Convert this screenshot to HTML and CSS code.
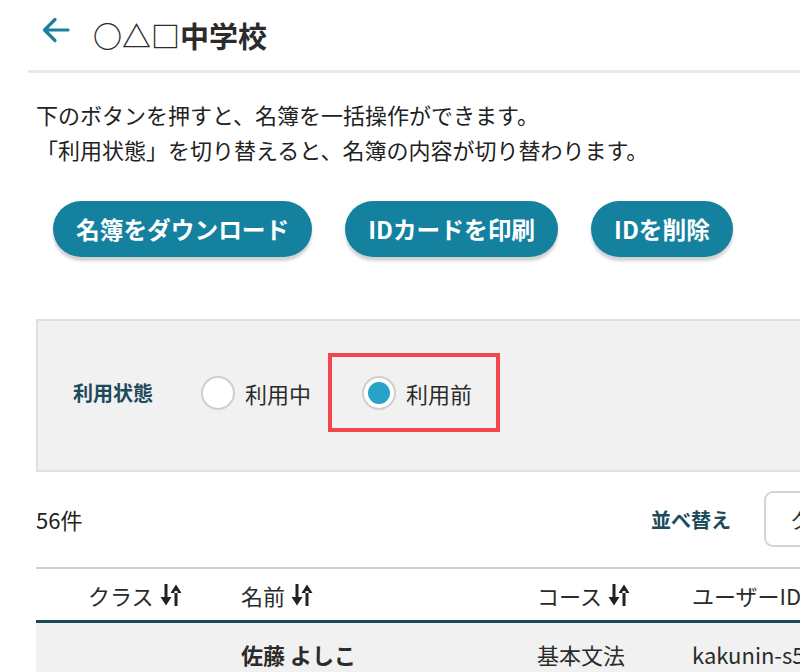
FILE: index.html
```html
<!DOCTYPE html>
<html lang="ja">
<head>
<meta charset="utf-8">
<link rel="stylesheet" href="styles.css">
</head>
<body>
<div class="page">
  <header class="header">
    <svg class="back" width="28" height="26" viewBox="0 0 28 26"><path d="M26 13H3M13 2.5L2.5 13 13 23.5" fill="none" stroke="#1a7f9c" stroke-width="3.2" stroke-linecap="round" stroke-linejoin="round"/></svg>
    <h1 class="title">○△□中学校</h1>
  </header>
  <p class="intro">下のボタンを押すと、名簿を一括操作ができます。<br>「利用状態」を切り替えると、名簿の内容が切り替わります。</p>
  <div class="actions">
    <button class="btn">名簿をダウンロード</button>
    <button class="btn">IDカードを印刷</button>
    <button class="btn">IDを削除</button>
  </div>
  <div class="main">
    <div class="filter">
      <span class="filter-label">利用状態</span>
      <label class="radio"><span class="dot"></span>利用中</label>
      <div class="highlight">
        <label class="radio"><span class="dot checked"></span>利用前</label>
      </div>
    </div>
    <div class="toolbar">
      <span class="count">56件</span>
      <span class="sort-label">並べ替え</span>
      <div class="select">クラス順</div>
    </div>
    <div class="table">
      <div class="row head">
        <div class="cell c1">クラス<svg class="sort" width="22" height="24" viewBox="0 0 22 24"><path d="M4.5 1h3v15h-3zM0.5 14h11L6 22.5zM14.5 8h3v15h-3zM10.5 10h11L16 1.5z" fill="#222"/></svg></div>
        <div class="cell c2">名前<svg class="sort" width="22" height="24" viewBox="0 0 22 24"><path d="M4.5 1h3v15h-3zM0.5 14h11L6 22.5zM14.5 8h3v15h-3zM10.5 10h11L16 1.5z" fill="#222"/></svg></div>
        <div class="cell c3">コース<svg class="sort" width="22" height="24" viewBox="0 0 22 24"><path d="M4.5 1h3v15h-3zM0.5 14h11L6 22.5zM14.5 8h3v15h-3zM10.5 10h11L16 1.5z" fill="#222"/></svg></div>
        <div class="cell c4">ユーザーID</div>
      </div>
      <div class="row body">
        <div class="cell c1"></div>
        <div class="cell c2 name">佐藤 よしこ</div>
        <div class="cell c3">基本文法</div>
        <div class="cell c4">kakunin-s5001</div>
      </div>
    </div>
  </div>
</div>
</body>
</html>
```
FILE: styles.css
```css
* { box-sizing: border-box; }
html, body { margin: 0; padding: 0; }
body {
  width: 800px;
  height: 672px;
  overflow: hidden;
  background: #fff;
  font-family: "Noto Sans CJK JP", "Noto Sans", sans-serif;
  color: #2b2b2b;
}
.page { width: 1000px; }
.header {
  margin-left: 28px;
  height: 73px;
  border-bottom: 3px solid #e7e8ea;
  display: flex;
  align-items: center;
  padding-left: 14px;
}
.back { margin-bottom: 10px; flex: none; }
.title {
  margin: 0 0 0 23px;
  font-size: 29px;
  font-weight: 700;
  color: #2b2b2b;
  letter-spacing: 0;
}
.intro {
  margin: 24px 0 0 36px;
  font-size: 22px;
  line-height: 35px;
  color: #222;
}
.actions {
  display: flex;
  gap: 33px;
  margin: 34px 0 0 53px;
}
.btn {
  height: 56px;
  padding: 0 23px;
  border: none;
  border-radius: 28px;
  background: #14819f;
  color: #fff;
  font-family: inherit;
  font-size: 23.7px;
  font-weight: 700;
  box-shadow: 0 4px 3px rgba(0,0,0,0.18);
}
.main { margin-left: 36px; width: 928px; }
.filter {
  margin-top: 62px;
  height: 153px;
  background: #f1f1f1;
  border: 2px solid #e0e0e0;
  display: flex;
  align-items: center;
  padding-left: 35px;
  padding-bottom: 6px;
}
.filter-label {
  font-size: 20px;
  font-weight: 700;
  color: #1d4b5b;
  margin-right: 48px;
}
.radio {
  display: flex;
  align-items: center;
  font-size: 22px;
  color: #2b2b2b;
}
.dot {
  width: 34px;
  height: 34px;
  border-radius: 50%;
  background: #fff;
  border: 2px solid #cfcfcf;
  margin-right: 10px;
  display: flex;
  align-items: center;
  justify-content: center;
}
.dot.checked::after {
  content: "";
  width: 22px;
  height: 22px;
  border-radius: 50%;
  background: #28a2c6;
}
.highlight {
  margin-left: 17px;
  width: 172px;
  height: 79px;
  border: 4px solid #f2464f;
  display: flex;
  align-items: center;
  padding-left: 30px;
}
.toolbar {
  margin-top: 19px;
  height: 56px;
  display: flex;
  align-items: center;
}
.count { font-size: 22px; color: #222; }
.sort-label {
  margin-left: auto;
  font-size: 20px;
  font-weight: 700;
  color: #1d4b5b;
  margin-right: 33px;
}
.select {
  width: 200px;
  height: 56px;
  border: 2px solid #d4d4d4;
  border-radius: 9px;
  padding-left: 24px;
  display: flex;
  align-items: center;
  font-size: 21px;
  color: #333;
}
.table { margin-top: 20px; border-top: 2px solid #cfcfcf; }
.row { display: grid; grid-template-columns: 205px 296px 155px 1fr; }
.row.head { height: 54px; border-bottom: 3px solid #1b4756; }
.row.body { height: 62px; background: #f1f1f1; }
.cell {
  display: flex;
  align-items: center;
  font-size: 22px;
  color: #2b2b2b;
  white-space: nowrap;
}
.c1 { padding-left: 52px; }
.sort { margin-left: 6px; }
.name { font-weight: 700; }
```
